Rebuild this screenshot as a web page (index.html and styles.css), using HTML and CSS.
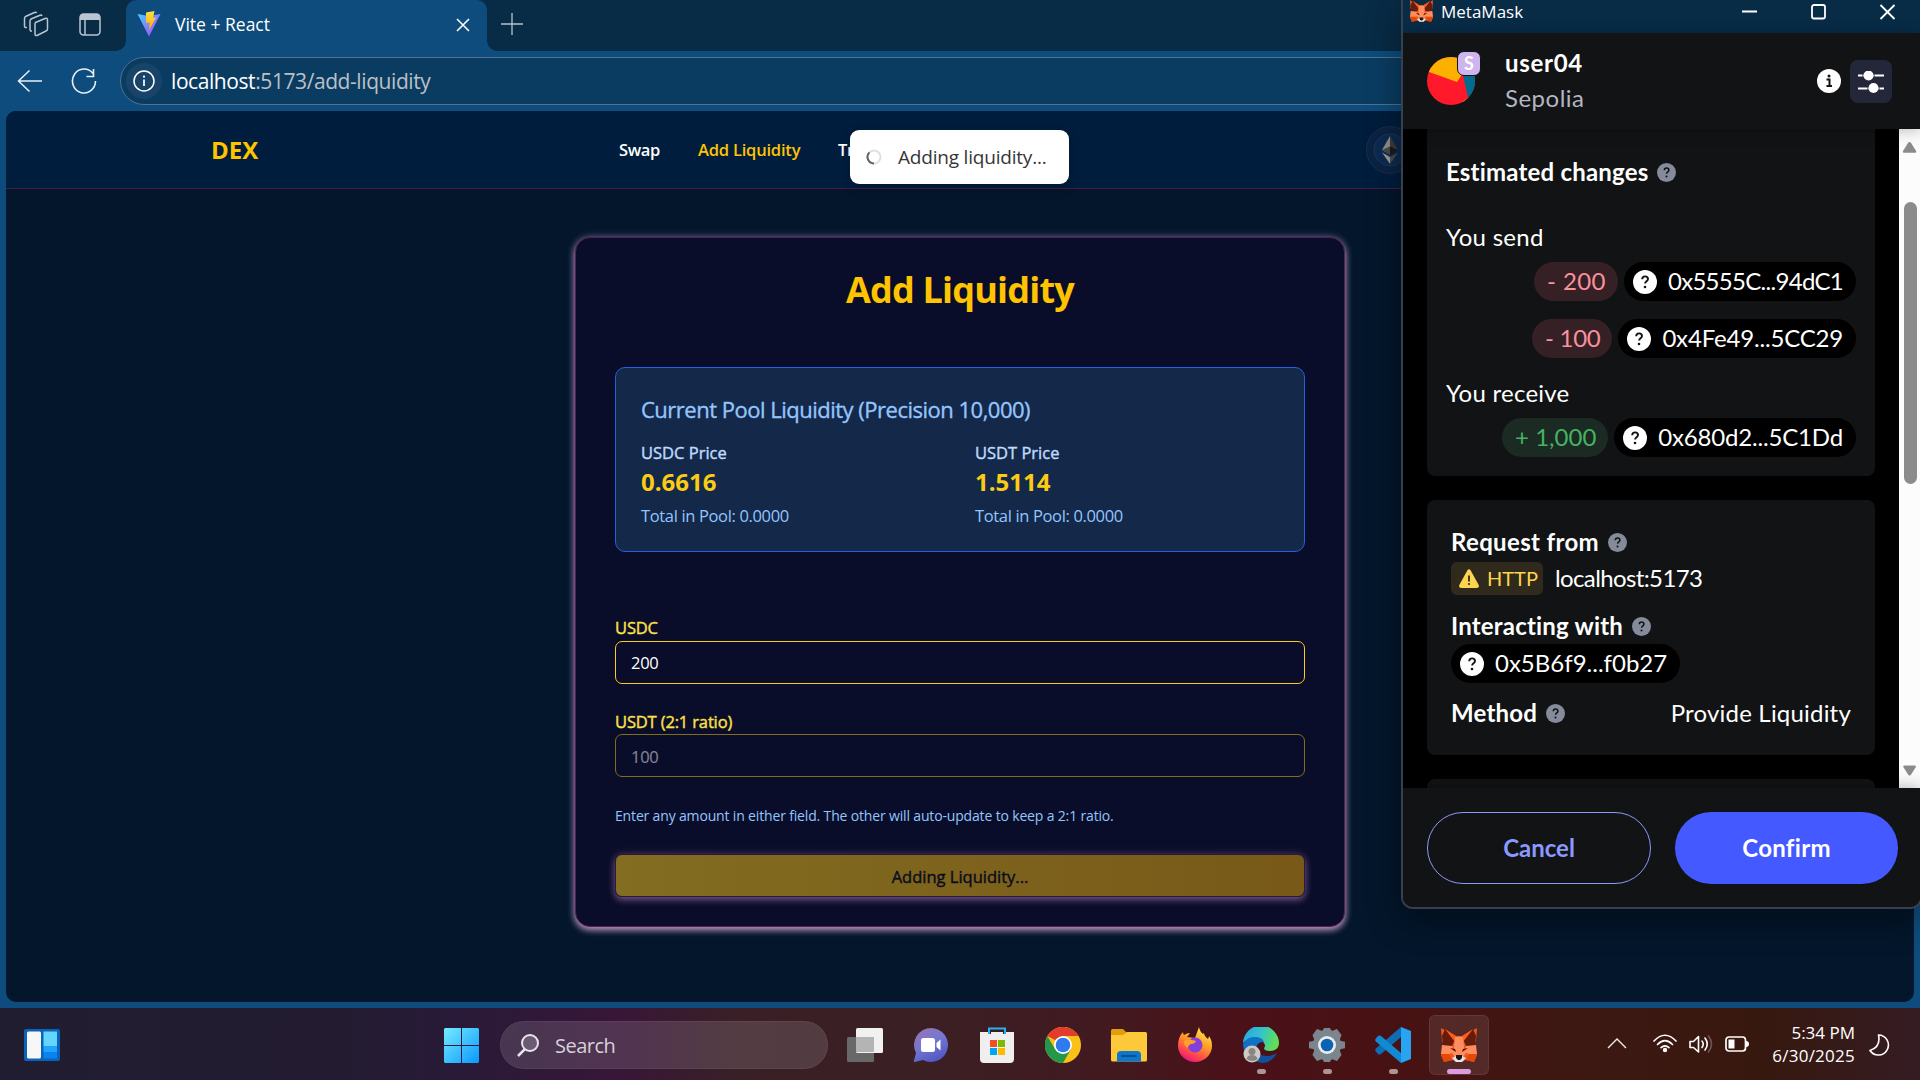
FILE: index.html
```html
<!DOCTYPE html>
<html lang="en">
<head>
<meta charset="utf-8">
<title>Vite + React</title>
<link rel="stylesheet" href="styles.css">
</head>
<body>
<svg width="0" height="0" class="defs" aria-hidden="true">
  <defs>
    <symbol id="fox" viewBox="0 0 36 34">
      <path d="M0 0l15 8h6L36 0l-1 13-2 4 3 10-3 7-9-2-3 2h-6l-3-2-9 2-3-7 3-10-2-4z" fill="#f0581c"/>
      <path d="M4 1l11 8-4 9-9 0-1-10zM32 1L21 9l4 9h9l1-10z" fill="#651c0c"/>
      <path d="M4 1l11 7h6l11-7-10 13h-8z" fill="#ff5c16"/>
      <path d="M14 9h8l1 11 2 5-3 4h-8l-3-4 2-5z" fill="#ff8d5d"/>
      <path d="M1 17l10 1 2 6-7 3-6-1zM35 17l-10 1-2 6 7 3 6-1z" fill="#ff8d5d"/>
      <path d="M0 26h8l3 6-8 2zM36 26h-8l-3 6 8 2z" fill="#e34807"/>
      <path d="M9 20l5 1 1 3zM27 20l-5 1-1 3z" fill="#3b1009"/>
      <path d="M11 30l4-2h6l4 2-4 4h-6z" fill="#dfe4ee"/>
      <path d="M15 27h6v3l-2 2h-2l-2-2z" fill="#1e1512"/>
    </symbol>
    <symbol id="help" viewBox="0 0 24 24">
      <circle cx="12" cy="12" r="12" fill="currentColor"/>
      <path d="M9.2 9.3c0-1.7 1.2-2.9 2.9-2.9s2.9 1.1 2.9 2.6c0 2.2-2.9 2.3-2.9 4.6" fill="none" stroke="#121314" stroke-width="1.9"/>
      <circle cx="12" cy="17" r="1.3" fill="#121314"/>
    </symbol>
  </defs>
</svg>

<div class="browser">
  <div class="tabstrip">
    <svg class="ic-workspaces" viewBox="0 0 26 26"><g fill="none" stroke="#b9c6d1" stroke-width="1.5" stroke-linejoin="round"><path d="M12.5 11.5L22 7.5q2.500-.8 2.500 1.500v9q0 1.500-1.500 2L14 24.500q-2 .5-2-1.500v-9.500q0-1.500.5-2z"/><path d="M9 20q-2 .3-2-1.500V10q0-1.500 1.500-2.200L17 4.200q1.500-.5 2 .8"/><path d="M4 16.500q-2.500.5-2.500-1.500V7.500Q1.500 6 3 5.200L11.500 1.500q1.500-.5 2.200.5"/></g></svg>
    <svg class="ic-vtabs" viewBox="0 0 22 23"><rect x="1" y="1" width="20" height="21" rx="3.500" fill="none" stroke="#b9c6d1" stroke-width="1.500"/><path d="M1 7V4q0-3 3-3h14q3 0 3 3v3z" fill="#b9c6d1"/><path d="M6 7v15" stroke="#b9c6d1" stroke-width="1.500"/></svg>
    <div class="tab">
      <svg class="ic-vite" viewBox="0 0 24 26"><defs><linearGradient id="va" x1="0" y1="0" x2="1" y2="1"><stop offset="0" stop-color="#41d1ff"/><stop offset="1" stop-color="#bd34fe"/></linearGradient><linearGradient id="vb" x1="0" y1="0" x2="0" y2="1"><stop offset="0" stop-color="#ffe140"/><stop offset="1" stop-color="#ffa800"/></linearGradient></defs><path d="M.5 3l11 2 12-2L12 25.500z" fill="url(#va)"/><path d="M9 1.500L17.500 0l-1.500 7 3-.5-7 13 .5-8-3.500.5z" fill="url(#vb)"/></svg>
      <span class="tab-title t">Vite + React</span>
      <svg class="ic-close" viewBox="0 0 14 14"><path d="M1 1l12 12M13 1L1 13" stroke="#fff" stroke-width="1.600"/></svg>
    </div>
    <svg class="ic-plus" viewBox="0 0 22 22"><path d="M11 0v22M0 11h22" stroke="#b3c3cf" stroke-width="1.300"/></svg>
  </div>
  <div class="toolbar">
    <svg class="ic-back" viewBox="0 0 26 24"><path d="M12.500 1.500L1.500 12l11 10.500M2 12h23" fill="none" stroke="#e8f0f6" stroke-width="1.500"/></svg>
    <svg class="ic-reload" viewBox="0 0 26 26"><path d="M24.500 13A11.500 12 0 1 1 22 5.500M22.500 1v7.500h-7" fill="none" stroke="#e8f0f6" stroke-width="1.600"/></svg>
    <div class="address">
      <span class="site"><svg viewBox="0 0 22 22"><circle cx="11" cy="11" r="10" fill="none" stroke="#fff" stroke-width="1.500"/><path d="M11 9.500V16" stroke="#fff" stroke-width="1.700"/><circle cx="11" cy="6.700" r="1.100" fill="#fff"/></svg></span>
      <span class="url t"><b>localhost</b>:5173/add-liquidity</span>
    </div>
  </div>
  <div class="viewport">
    <nav class="nav">
      <span class="brand t">DEX</span>
      <span class="link l1 t">Swap</span>
      <span class="link l2 on t">Add Liquidity</span>
      <span class="link l3 t">Tr</span>
      <span class="wallet"><svg viewBox="0 0 48 48"><circle cx="24" cy="24" r="23.500" fill="#0b2341" stroke="#153051"/><circle cx="24" cy="24" r="16" fill="#0c2a50" stroke="#17375d"/><path d="M24 10l-8 14 8 4.500z" fill="#8f8f8f"/><path d="M24 10l8 14-8 4.500z" fill="#3c3c3b"/><path d="M16 24l8-3.500V29z" fill="#4a4a4a"/><path d="M24 20.500L32 24l-8 5z" fill="#1b1b1b"/><path d="M16 26.500l8 11.500v-7z" fill="#9c9c9b"/><path d="M32 26.500L24 38v-7z" fill="#4b4b4b"/></svg></span>
    </nav>
    <div class="toast"><svg viewBox="0 0 16 16"><circle cx="8" cy="8" r="6.500" fill="none" stroke="#e0e0e0" stroke-width="2"/><path d="M8 14.500A6.500 6.500 0 0 1 3.400 3.400" fill="none" stroke="#616161" stroke-width="2"/></svg><span class="t">Adding liquidity...</span></div>
    <main class="main">
      <section class="card">
        <h1 class="title">Add Liquidity</h1>
        <div class="pool">
          <h2 class="pool-title t">Current Pool Liquidity (Precision 10,000)</h2>
          <div class="pool-grid">
            <div><p class="pl">USDC Price</p><p class="pv">0.6616</p><p class="pt">Total in Pool: 0.0000</p></div>
            <div><p class="pl">USDT Price</p><p class="pv">1.5114</p><p class="pt">Total in Pool: 0.0000</p></div>
          </div>
        </div>
        <div class="field"><p class="label">USDC</p><div class="input">200</div></div>
        <div class="field second"><p class="label">USDT (2:1 ratio)</p><div class="input off">100</div></div>
        <p class="hint t">Enter any amount in either field. The other will auto-update to keep a 2:1 ratio.</p>
        <div class="submit">Adding Liquidity...</div>
      </section>
    </main>
  </div>
</div>

<div class="popup">
  <div class="p-title">
    <svg class="p-fox"><use href="#fox"/></svg><span class="p-name t">MetaMask</span>
    <svg class="p-ctl" viewBox="0 0 154 18"><path d="M0 8.500h15" stroke="#fff" stroke-width="2"/><rect x="70" y="2" width="13" height="13.500" rx="2" fill="none" stroke="#fff" stroke-width="1.800"/><path d="M138.500 2l14 14M152.500 2l-14 14" stroke="#fff" stroke-width="1.800"/></svg>
  </div>
  <div class="p-head">
    <div class="avatar">
      <svg viewBox="0 0 48 48"><clipPath id="av"><circle cx="24" cy="24" r="24"/></clipPath><g clip-path="url(#av)"><rect width="48" height="48" fill="#ff192b"/><path d="M0 0h48v10L36 16l-6 9L2 15z" fill="#fcb000"/><path d="M33 15l3 3 5 23 7-4V10z" fill="#016c8f"/><path d="M35 45l6-4 3-2-2 6z" fill="#f5b200"/></g></svg>
      <span class="net">S</span>
    </div>
    <div class="who"><span class="user t">user04</span><span class="chain t">Sepolia</span></div>
    <svg class="p-info" viewBox="0 0 24 24"><circle cx="12" cy="12" r="12" fill="#fff"/><path d="M9.500 10.500h3V17M9.500 17h5.500" fill="none" stroke="#121314" stroke-width="2"/><circle cx="12" cy="7" r="1.500" fill="#121314"/></svg>
    <span class="p-set"><svg viewBox="0 0 26 22"><path d="M0 4.500h4M17 4.500h9M0 17.500h9M22 17.500h4" stroke="#fff" stroke-width="1.800"/><path d="M4 4.500h13M9 17.500h13" stroke="#8f91a0" stroke-width="1.800"/><circle cx="10.500" cy="4.500" r="5" fill="#fff"/><circle cx="15.500" cy="17" r="5" fill="#fff"/></svg></span>
  </div>
  <div class="p-body">
    <div class="p-scroll">
      <div class="pc pc1">
        <div class="row h"><span class="t">Estimated changes</span><svg class="q"><use href="#help"/></svg></div>
        <div class="row s1"><span class="t">You send</span></div>
        <div class="row right a1"><span class="amt neg n200"><span class="t">- 200</span></span><span class="addr tight"><svg><use href="#help"/></svg><span class="t">0x5555C...94dC1</span></span></div>
        <div class="row right a2"><span class="amt neg n100"><span class="t">- 100</span></span><span class="addr snug"><svg><use href="#help"/></svg><span class="t">0x4Fe49...5CC29</span></span></div>
        <div class="row s2"><span class="t">You receive</span></div>
        <div class="row right a3"><span class="amt pos"><span class="t">+ 1,000</span></span><span class="addr snug"><svg><use href="#help"/></svg><span class="t">0x680d2...5C1Dd</span></span></div>
      </div>
      <div class="pc pc2">
        <div class="row h r"><span class="t">Request from</span><svg class="q"><use href="#help"/></svg></div>
        <div class="row http-row"><span class="http"><svg viewBox="0 0 20 19"><path d="M8.300 1.500q1.700-2.400 3.400 0l8 14.500q.8 3-2 3H2.300q-2.800 0-2-3z" fill="#ffd54f"/><path d="M10 6.500v6" stroke="#2f2a1c" stroke-width="1.800"/><circle cx="10" cy="15" r="1.100" fill="#2f2a1c"/></svg><span class="t">HTTP</span></span><span class="host t">localhost:5173</span></div>
        <div class="row h i"><span class="t">Interacting with</span><svg class="q"><use href="#help"/></svg></div>
        <div class="row"><span class="addr"><svg><use href="#help"/></svg><span class="t">0x5B6f9...f0b27</span></span></div>
        <div class="row h m"><span class="t">Method</span><svg class="q"><use href="#help"/></svg><span class="val t">Provide Liquidity</span></div>
      </div>
      <div class="pc pc3"></div>
    </div>
    <div class="bar"><svg viewBox="0 0 21 659"><path d="M10.500 13q1 0 1.600 1l5 8q.6 1.800-1 1.800H5q-1.600 0-1-1.800l5-8q.5-1 1.500-1zM10.500 646.500q1 0 1.600-1l4.500-7q1-2-1-2h-10q-2 0-1 2l4.500 7q.4 1 1.400 1z" fill="#8b8b8b"/><rect x="5" y="73" width="13" height="282" rx="6.500" fill="#8b8b8b"/></svg></div>
  </div>
  <div class="p-foot"><span class="btn cancel">Cancel</span><span class="btn confirm">Confirm</span></div>
</div>

<div class="taskbar">
  <svg class="w-icon" viewBox="0 0 36 32"><rect width="36" height="32" rx="2" fill="#0a63b8"/><rect x="3" y="2.500" width="14" height="27" rx="1.500" fill="#f7f7f7"/><rect x="19.500" y="2.500" width="13.500" height="15" fill="#63d5ff"/><rect x="19.500" y="17.500" width="13.500" height="6" fill="#1fa5ff"/><rect x="19.500" y="23.500" width="13.500" height="6" fill="#0784f0"/></svg>
  <svg class="start" viewBox="0 0 35 35"><defs><linearGradient id="wg" x1="0" y1="0" x2="1" y2="1"><stop offset="0" stop-color="#74ecff"/><stop offset="1" stop-color="#0a97ff"/></linearGradient></defs><path d="M1 0h16v17H0V1zM18 0h16l1 1v16H18zM0 18h17v17H1l-1-1zM18 18h17v16l-1 1H18z" fill="url(#wg)"/></svg>
  <div class="search"><svg viewBox="0 0 22 23"><circle cx="13" cy="9" r="8" fill="#6c5a74" stroke="#e8e4ea" stroke-width="2"/><path d="M8 15l-7 7" stroke="#e8e4ea" stroke-width="2.500"/></svg><span class="t">Search</span></div>
  <div class="apps">
    <span class="app"><svg viewBox="0 0 36 36"><rect y="10" width="27" height="25" rx="1.500" fill="#686868"/><rect x="9" y="1" width="27" height="25" rx="1.500" fill="#f1f1f1"/><rect x="9" y="10" width="18" height="15" fill="#b4b4b4"/></svg></span>
    <span class="app"><svg viewBox="0 0 36 36"><defs><linearGradient id="cg" x1=".1" y1="0" x2=".6" y2="1"><stop offset="0" stop-color="#9a72b4"/><stop offset=".5" stop-color="#7478d0"/><stop offset="1" stop-color="#5257c4"/></linearGradient></defs><path d="M18 1a17 17 0 1 1-8 32l-8 2q-1.500 0-1-1.500L3 26A17 17 0 0 1 18 1z" fill="url(#cg)"/><rect x="8" y="11" width="14" height="14" rx="2.500" fill="#fff"/><path d="M23.500 16l4-3.500v11l-4-3.500z" fill="#fff"/></svg></span>
    <span class="app"><svg viewBox="0 0 36 36"><path d="M10 7V1.500h16V7" fill="none" stroke="#22b3f0" stroke-width="2"/><path d="M1 5h8v2h3V5h12v2h3V5h8v27q0 4-4 4H5q-4 0-4-4z" fill="#efefef"/><path d="M11 13h7v7h-7z" fill="#f25022"/><path d="M19 13h7v7h-7z" fill="#7fba00"/><path d="M11 21h7v7h-7z" fill="#00a4ef"/><path d="M19 21h7v7h-7z" fill="#ffb900"/></svg></span>
    <span class="app"><svg viewBox="0 0 36 36"><circle cx="18" cy="18" r="18" fill="#fbc116"/><path d="M2.400 9A18 18 0 0 1 33.600 9H18L10 13z" fill="#e33b2e"/><path d="M2.400 9A18 18 0 0 0 18 36l7.800-13.500-8 4-7.600-4z" fill="#249748"/><circle cx="18" cy="18" r="9" fill="#fff"/><circle cx="18" cy="18" r="7.300" fill="#2d7bee"/></svg></span>
    <span class="app"><svg viewBox="0 0 36 36"><path d="M0 3.500Q0 2 1.500 2H12l4 4-4 4H0z" fill="#e19e09"/><path d="M0 8h12l4-3h18.500q1.500 0 1.500 1.500V33q0 1.500-1.500 1.500h-33Q0 34.500 0 33z" fill="#fdc93a"/><path d="M6 34.500V28q0-4 4-4h16q4 0 4 4v6.500z" fill="#0b78cc"/><path d="M11 29h14" stroke="#0a4d92" stroke-width="2" stroke-linecap="round"/></svg></span>
    <span class="app"><svg viewBox="0 0 36 36"><defs><linearGradient id="ff" x1=".8" y1="0" x2=".3" y2="1"><stop offset="0" stop-color="#fff44f"/><stop offset=".45" stop-color="#ff9a27"/><stop offset=".8" stop-color="#ff3f50"/><stop offset="1" stop-color="#e31587"/></linearGradient></defs><path d="M22 0q1 5 4 7l1-1q0 3 4 6 1-2 1-3 3 4 3 10a17 16 0 0 1-34 0Q1 10 6 5q0 2 1 3 3-2 6-2-2 3-3 4l8 1z" fill="url(#ff)"/><circle cx="18" cy="18" r="7.500" fill="#8440d8"/><path d="M7 14q4-3 8-1l4 1q-1 3-5 3-3 1-3 4-5-3-4-7z" fill="#ffa02b"/></svg></span>
    <span class="app run"><svg viewBox="0 0 36 36"><defs><linearGradient id="eg" x1="0" y1=".2" x2="1" y2=".5"><stop offset="0" stop-color="#25a7e8"/><stop offset=".5" stop-color="#35c3c9"/><stop offset="1" stop-color="#62e04e"/></linearGradient></defs><path d="M0 16A18 18 0 0 1 36 17q-1 7-9 7-6 0-6-3 2-2 0-5-3-5-10-5-8 1-11 5z" fill="url(#eg)"/><path d="M0 17Q5 9 12 10q7 0 9 5-7-1-8 7 1 9 11 12A18 18 0 0 1 0 17z" fill="#0f72c4"/><path d="M13 20q1 10 13 9 5-1 8-3-5 10-16 10-7-5-5-16z" fill="#12509c"/><circle cx="9" cy="27" r="8.500" fill="#cfcac6"/><circle cx="9" cy="24.500" r="3.500" fill="#8a8581"/><path d="M3.500 32q1-4 5.500-4t5.500 4q-5 4-11 0z" fill="#8a8581"/></svg></span>
    <span class="app run"><svg viewBox="0 0 36 36"><path d="M8 2l4 1.500q1 .8 2-.5L15 1h6l1 2q1 1.300 2 .5L28 2l4.500 6-1.500 4q-.5 1.500 1 2l4 .8v6.400l-4 .8q-1.500.5-1 2l1.500 4L28 34l-4-1.500q-1-.8-2 .5l-1 2h-6l-1-2q-1-1.300-2-.5L8 34l-4.500-6L5 24q.5-1.500-1-2l-4-.8v-6.400L4 14q1.500-.5 1-2L3.500 8z" fill="#7b858d"/><circle cx="18" cy="18" r="9" fill="#e9edf0"/><circle cx="18" cy="18" r="6.300" fill="#0b63b4"/></svg></span>
    <span class="app run"><svg viewBox="0 0 36 36"><path d="M26 0v10L6 27q-1.500 1-3 0L.8 24.500q-1.200-1.500 0-3z" fill="#0d6db5"/><path d="M26 36V26L6 9Q4.500 8 3 9L.8 11.500q-1.200 1.500 0 3z" fill="#1389d4"/><path d="M26 0l10 4v28l-10 4z" fill="#27a4f2"/></svg></span>
    <span class="app run active"><svg viewBox="0 0 36 36"><use href="#fox" y="1" width="36" height="34"/></svg></span>
  </div>
  <div class="tray">
    <svg class="chev" viewBox="0 0 20 12"><path d="M1 11l9-9 9 9" fill="none" stroke="#f2eeee" stroke-width="1.400"/></svg>
    <svg class="wifi" viewBox="0 0 24 19"><g fill="none" stroke="#fff" stroke-width="1.700" stroke-linecap="round"><path d="M1 7Q12-4.500 23 7"/><path d="M4.500 10.500q7.500-7.500 15 0"/><path d="M8 13.700q4-3.800 8 0"/></g><circle cx="12" cy="16" r="2.200" fill="#fff"/></svg>
    <svg class="vol" viewBox="0 0 24 20"><g fill="none" stroke="#fff" stroke-width="1.600" stroke-linejoin="round" stroke-linecap="round"><path d="M1 7.500v6h3.500l5 4.500V2.500l-5 5z"/><path d="M13 7q2.500 3 0 6.500M16 4q4.500 6 0 12"/><path d="M19.500 2q6 8 0 16" stroke="#6f5450"/></g></svg>
    <svg class="bat" viewBox="0 0 24 16"><rect x="1" y="1" width="19.500" height="14" rx="3" fill="none" stroke="#fff" stroke-width="1.700"/><rect x="3.500" y="3.500" width="6" height="9" fill="#fff"/><path d="M21 5q3 0 3 3t-3 3z" fill="#fff"/></svg>
    <div class="clock"><div>5:34 PM</div><div class="date">6/30/2025</div></div>
    <svg class="moon" viewBox="0 0 21 22"><path d="M9.500 1A10 10 0 1 1 1 16.500Q12 13 9.500 1z" fill="none" stroke="#fff" stroke-width="1.600" stroke-linejoin="round"/></svg>
  </div>
</div>
</body>
</html>
```
FILE: styles.css
```css
* { box-sizing: border-box; }
html, body { margin: 0; width: 1920px; height: 1080px; overflow: hidden; }
body { position: relative; display: flex; flex-direction: column; font-family: "Open Sans", "Noto Sans", sans-serif; background: #0d4c7c; color: #fff; }
h1, h2, p { margin: 0; font-weight: inherit; }
svg { display: block; flex: none; }
.defs { position: absolute; }
.t { white-space: nowrap; }

/* browser chrome */
.browser { height: 1008px; display: flex; flex-direction: column; background: #0d4c7c; }
.tabstrip { height: 51px; flex: none; display: flex; background: #082b46; }
.ic-workspaces { width: 26px; height: 26px; margin: 11px 0 0 23px; }
.ic-vtabs { width: 22px; height: 23px; margin: 13px 0 0 30px; }
.tab { position: relative; width: 361px; height: 51px; margin-left: 25px; background: #0d4c7c; border-radius: 10px 10px 0 0; display: flex; align-items: flex-start; }
.tab::before, .tab::after { content: ""; position: absolute; bottom: 0; width: 10px; height: 10px; }
.tab::before { left: -10px; background: radial-gradient(circle at 0 0, #082b46 9.5px, #0d4c7c 10px); }
.tab::after { right: -10px; background: radial-gradient(circle at 100% 0, #082b46 9.5px, #0d4c7c 10px); }
.ic-vite { width: 24px; height: 26px; margin: 11px 0 0 11px; }
.tab-title { margin-left: 14px; font-size: 17.5px; line-height: 24px; margin-top: 12px; letter-spacing: 0; }
.ic-close { width: 14px; height: 14px; margin: 18px 17px 0 auto; }
.ic-plus { width: 22px; height: 22px; margin: 13px 0 0 14px; }
.toolbar { height: 60px; flex: none; display: flex; }
.ic-back { width: 26px; height: 24px; margin: 18px 0 0 17px; }
.ic-reload { width: 26px; height: 26px; margin: 17px 0 0 28px; }
.address { height: 48px; flex: 1; margin: 6px 60px 0 23px; border: 1px solid #4f7391; border-radius: 24px; background: #0a3c62; display: flex; align-items: center; }
.site { width: 36px; height: 36px; margin-left: 5px; border-radius: 50%; background: #174468; display: flex; align-items: center; justify-content: center; }
.site svg { width: 22px; height: 22px; }
.url { margin-left: 9px; font-size: 21px; color: #bcc0c5; letter-spacing: -.42px; }
.url b { font-weight: 400; color: #fff; }

/* page */
.viewport { position: relative; width: 1908px; height: 891px; margin-left: 6px; border-radius: 10px; overflow: hidden; background: #03162b; }
.nav { height: 78px; display: flex; align-items: center; background: #001d3d; border-bottom: 1px solid #4c1a4c; }
.brand { width: 408px; margin-left: 205px; font-size: 24px; font-weight: 700; color: #ffc300; }
.link { font-size: 16.5px; font-weight: 600; color: #fff; letter-spacing: -.35px; }
.l1 { width: 79px; }
.l2 { width: 140px; letter-spacing: -.2px; }
.l3 { width: 98px; }
.on { color: #ffc300; }
.wallet { margin-left: 430px; }
.wallet svg { width: 48px; height: 48px; }
.toast { position: absolute; left: 844px; top: 19px; width: 219px; height: 54px; border-radius: 9px; background: #fff; box-shadow: 0 4px 12px rgba(0,0,0,.2); display: flex; align-items: center; padding-left: 16px; color: #363636; font-size: 19px; letter-spacing: -.2px; }
.toast svg { width: 16px; height: 16px; margin-right: 16px; }
.main { display: flex; justify-content: center; padding-top: 48px; }
.card { width: 770px; height: 690px; padding: 0 39px; border: 1px solid #571f55; border-radius: 15px; background: #0a0d29; box-shadow: 0 3px 7px rgba(230,175,225,.8), 0 0 10px rgba(200,180,230,.3); }
.title { height: 104px; padding-top: 26px; margin-bottom: 25px; text-align: center; font-size: 36px; line-height: 52px; font-weight: 700; letter-spacing: -.8px; color: #ffc300; }
.pool { height: 185px; padding: 24px 25px; border: 1px solid #2560e0; border-radius: 10px; background: #142849; }
.pool-title { font-size: 22px; line-height: 34px; letter-spacing: -.5px; -webkit-text-stroke: .35px; color: #93c5fd; }
.pool-grid { display: grid; grid-template-columns: 334px 1fr; padding-top: 15px; }
.pl { font-size: 16.5px; line-height: 24px; -webkit-text-stroke: .4px; color: #bfdbfe; }
.pv { font-size: 24px; line-height: 33px; font-weight: 700; color: #facc15; }
.pt { font-size: 16.5px; line-height: 36px; letter-spacing: -.35px; color: #93c5fd; }
.field { height: 93px; }
.pool + .field { margin-top: 64px; }
.label { height: 25px; font-size: 16.5px; line-height: 24px; -webkit-text-stroke: .4px; letter-spacing: -.15px; color: #fde047; }
.second .label { line-height: 26px; }
.input { height: 43px; border: 1px solid #facc15; border-radius: 7px; padding-left: 15px; font-size: 16.5px; line-height: 42px; letter-spacing: -.3px; }
.off { opacity: .5; line-height: 44px; }
.hint { height: 52px; font-size: 14px; line-height: 24px; letter-spacing: -.16px; color: #93c5fd; padding-top: 2px; }
.submit { height: 43px; border: 1px solid #331543; border-radius: 7px; background: linear-gradient(90deg, #826d21, #785918); box-shadow: 0 3px 7px rgba(200,150,210,.45), 0 0 10px rgba(200,150,220,.2); text-align: center; font-size: 16.5px; line-height: 43px; -webkit-text-stroke: .4px; color: #090c1c; }

/* wallet popup window */
.popup { position: absolute; left: 1401px; top: -2px; width: 521px; height: 911px; border: 2px solid #36414f; border-radius: 0 0 12px 12px; background: #000; overflow: hidden; box-shadow: 0 10px 34px rgba(0,0,0,.4); display: flex; flex-direction: column; font-family: Lato, "Open Sans", sans-serif; }
.p-title { height: 33px; flex: none; background: #082b46; display: flex; }
.p-fox { width: 23px; height: 22px; margin-left: 7px; }
.p-name { font-family: "Open Sans", sans-serif; font-size: 17px; line-height: 24px; margin-left: 8px; width: 301px; letter-spacing: 0; }
.p-ctl { width: 154px; height: 18px; margin-top: 3px; }
.p-head { height: 96px; flex: none; background: #121314; display: flex; z-index: 1; box-shadow: 0 2px 14px rgba(0,0,0,.25); }
.avatar { position: relative; width: 48px; height: 48px; margin: 24px 0 0 24px; }
.avatar svg { width: 48px; height: 48px; }
.net { position: absolute; left: 30px; top: -6px; width: 24px; height: 25px; border: 1px solid #121314; border-radius: 7px; background: #cfb5f0; text-align: center; font-size: 18px; line-height: 22px; font-weight: 700; }
.who { width: 312px; margin-left: 30px; padding-top: 12px; display: flex; flex-direction: column; font-size: 24px; line-height: 36px; }
.user { font-weight: 700; letter-spacing: .7px; line-height: 35px; }
.chain { color: #b4b6c2; letter-spacing: .5px; }
.p-info { width: 24px; height: 24px; margin-top: 36px; }
.p-set { width: 42px; height: 43px; margin: 27px 0 0 9px; border-radius: 8px; background: #242739; display: flex; align-items: center; justify-content: center; }
.p-set svg { width: 26px; height: 22px; }
.p-body { height: 659px; flex: none; display: flex; overflow: hidden; }
.p-scroll { width: 496px; flex: none; padding: 0 24px; }
.bar { width: 21px; background: #fcfcfc; }
.bar svg { width: 21px; height: 659px; }
.pc { background: #121314; border-radius: 8px; font-size: 24px; line-height: 36px; }
.row { display: flex; align-items: center; }
.right { justify-content: flex-end; gap: 6px; }
.h { font-weight: 700; height: 36px; letter-spacing: .2px; }
.r { letter-spacing: .35px; }
.q { width: 19px; height: 19px; margin-left: 9px; color: #858b9a; }
.pc1 { height: 347px; border-radius: 0 0 8px 8px; padding: 25px 19px 0 19px; }
.s1 { height: 36px; margin: 29px 0 7px; letter-spacing: .3px; }
.a1 { margin-bottom: 18px; }
.s2 { height: 36px; margin: 17px 0 7px; letter-spacing: .25px; }
.amt, .addr { height: 39px; border-radius: 20px; display: flex; align-items: center; }
.amt .t, .addr .t { margin-top: -2px; }
.amt { padding: 0 12px 0 13px; }
.neg { background: #352025; color: #f9919c; }
.pos { background: #1b2a22; color: #45b362; }
.n200 { letter-spacing: .4px; }
.n100 { letter-spacing: -.3px; }
.addr { background: #000; padding: 0 13px 0 9px; }
.addr svg { width: 24px; height: 24px; margin-right: 11px; }
.tight { letter-spacing: -.7px; }
.snug { letter-spacing: -.18px; }
.pc2 { height: 255px; margin-top: 24px; padding: 24px 24px 0; }
.http-row { height: 33px; margin-top: 2px; }
.http-row .t { margin-top: -2px; }
.http { width: 92px; height: 33px; margin-right: 12px; border-radius: 6px; background: #2f2a1c; color: #ffd54f; display: flex; align-items: center; padding-left: 8px; gap: 8px; font-size: 20px; }
.http svg { width: 20px; height: 19px; }
.host { letter-spacing: -.62px; }
.i { margin-top: 13px; }
.m { margin-top: 12px; }
.val { margin-left: auto; font-weight: 400; }
.pc3 { height: 40px; margin-top: 24px; }
.p-foot { flex: 1; z-index: 1; background: #121314; display: flex; gap: 24px; padding: 24px 0 0 24px; box-shadow: 0 -2px 14px rgba(0,0,0,.25); }
.btn { height: 72px; border-radius: 36px; font-size: 24px; line-height: 70px; text-align: center; font-weight: 700; }
.cancel { width: 224px; border: 1px solid #8b99ff; color: #8b99ff; }
.confirm { width: 223px; background: #4459ff; line-height: 72px; letter-spacing: .3px; }

/* taskbar */
.taskbar { height: 72px; flex: none; display: flex; background: linear-gradient(90deg, #211d30 0, #231c31 340px, #281a38 450px, #381638 620px, #3a2026 740px, #3a2024 900px, #411a20 1100px, #4a1119 1230px, #471213 1400px, #3d1812 1570px, #37180f 1760px, #351c22 1910px); }
.w-icon { width: 36px; height: 32px; margin: 21px 0 0 24px; }
.start { width: 35px; height: 35px; margin: 20px 0 0 384px; }
.search { width: 328px; height: 48px; margin: 13px 0 0 21px; border-radius: 24px; background: rgba(255,255,255,.13); border: 1px solid rgba(255,255,255,.05); display: flex; align-items: center; padding-left: 16px; font-size: 20px; letter-spacing: -.5px; color: #d9d0dc; }
.search svg { width: 22px; height: 23px; margin-right: 16px; }
.apps { display: flex; gap: 6px; margin: 7px 0 0 7px; }
.app { position: relative; width: 60px; height: 60px; padding: 12px; border-radius: 6px; }
.app svg { width: 36px; height: 36px; }
.run::after { content: ""; position: absolute; left: 26px; bottom: 1px; width: 9px; height: 5px; border-radius: 3px; background: #b09494; }
.active { background: rgba(255,255,255,.09); border: 1px solid rgba(255,255,255,.07); padding: 11px; }
.active::after { left: 17px; bottom: 0; width: 24px; background: #dc9ce4; }
.tray { display: flex; margin-left: auto; }
.chev { width: 20px; height: 12px; margin: 29px 26px 0 0; }
.wifi { width: 24px; height: 19px; margin: 26px 12px 0 0; }
.vol { width: 24px; height: 20px; margin: 26px 12px 0 0; }
.bat { width: 24px; height: 16px; margin: 28px 0 0; }
.clock { width: 106px; padding-top: 13px; text-align: right; font-size: 17px; line-height: 23px; }
.date { letter-spacing: .25px; }
.moon { width: 21px; height: 22px; margin: 26px 30px 0 14px; }
```
